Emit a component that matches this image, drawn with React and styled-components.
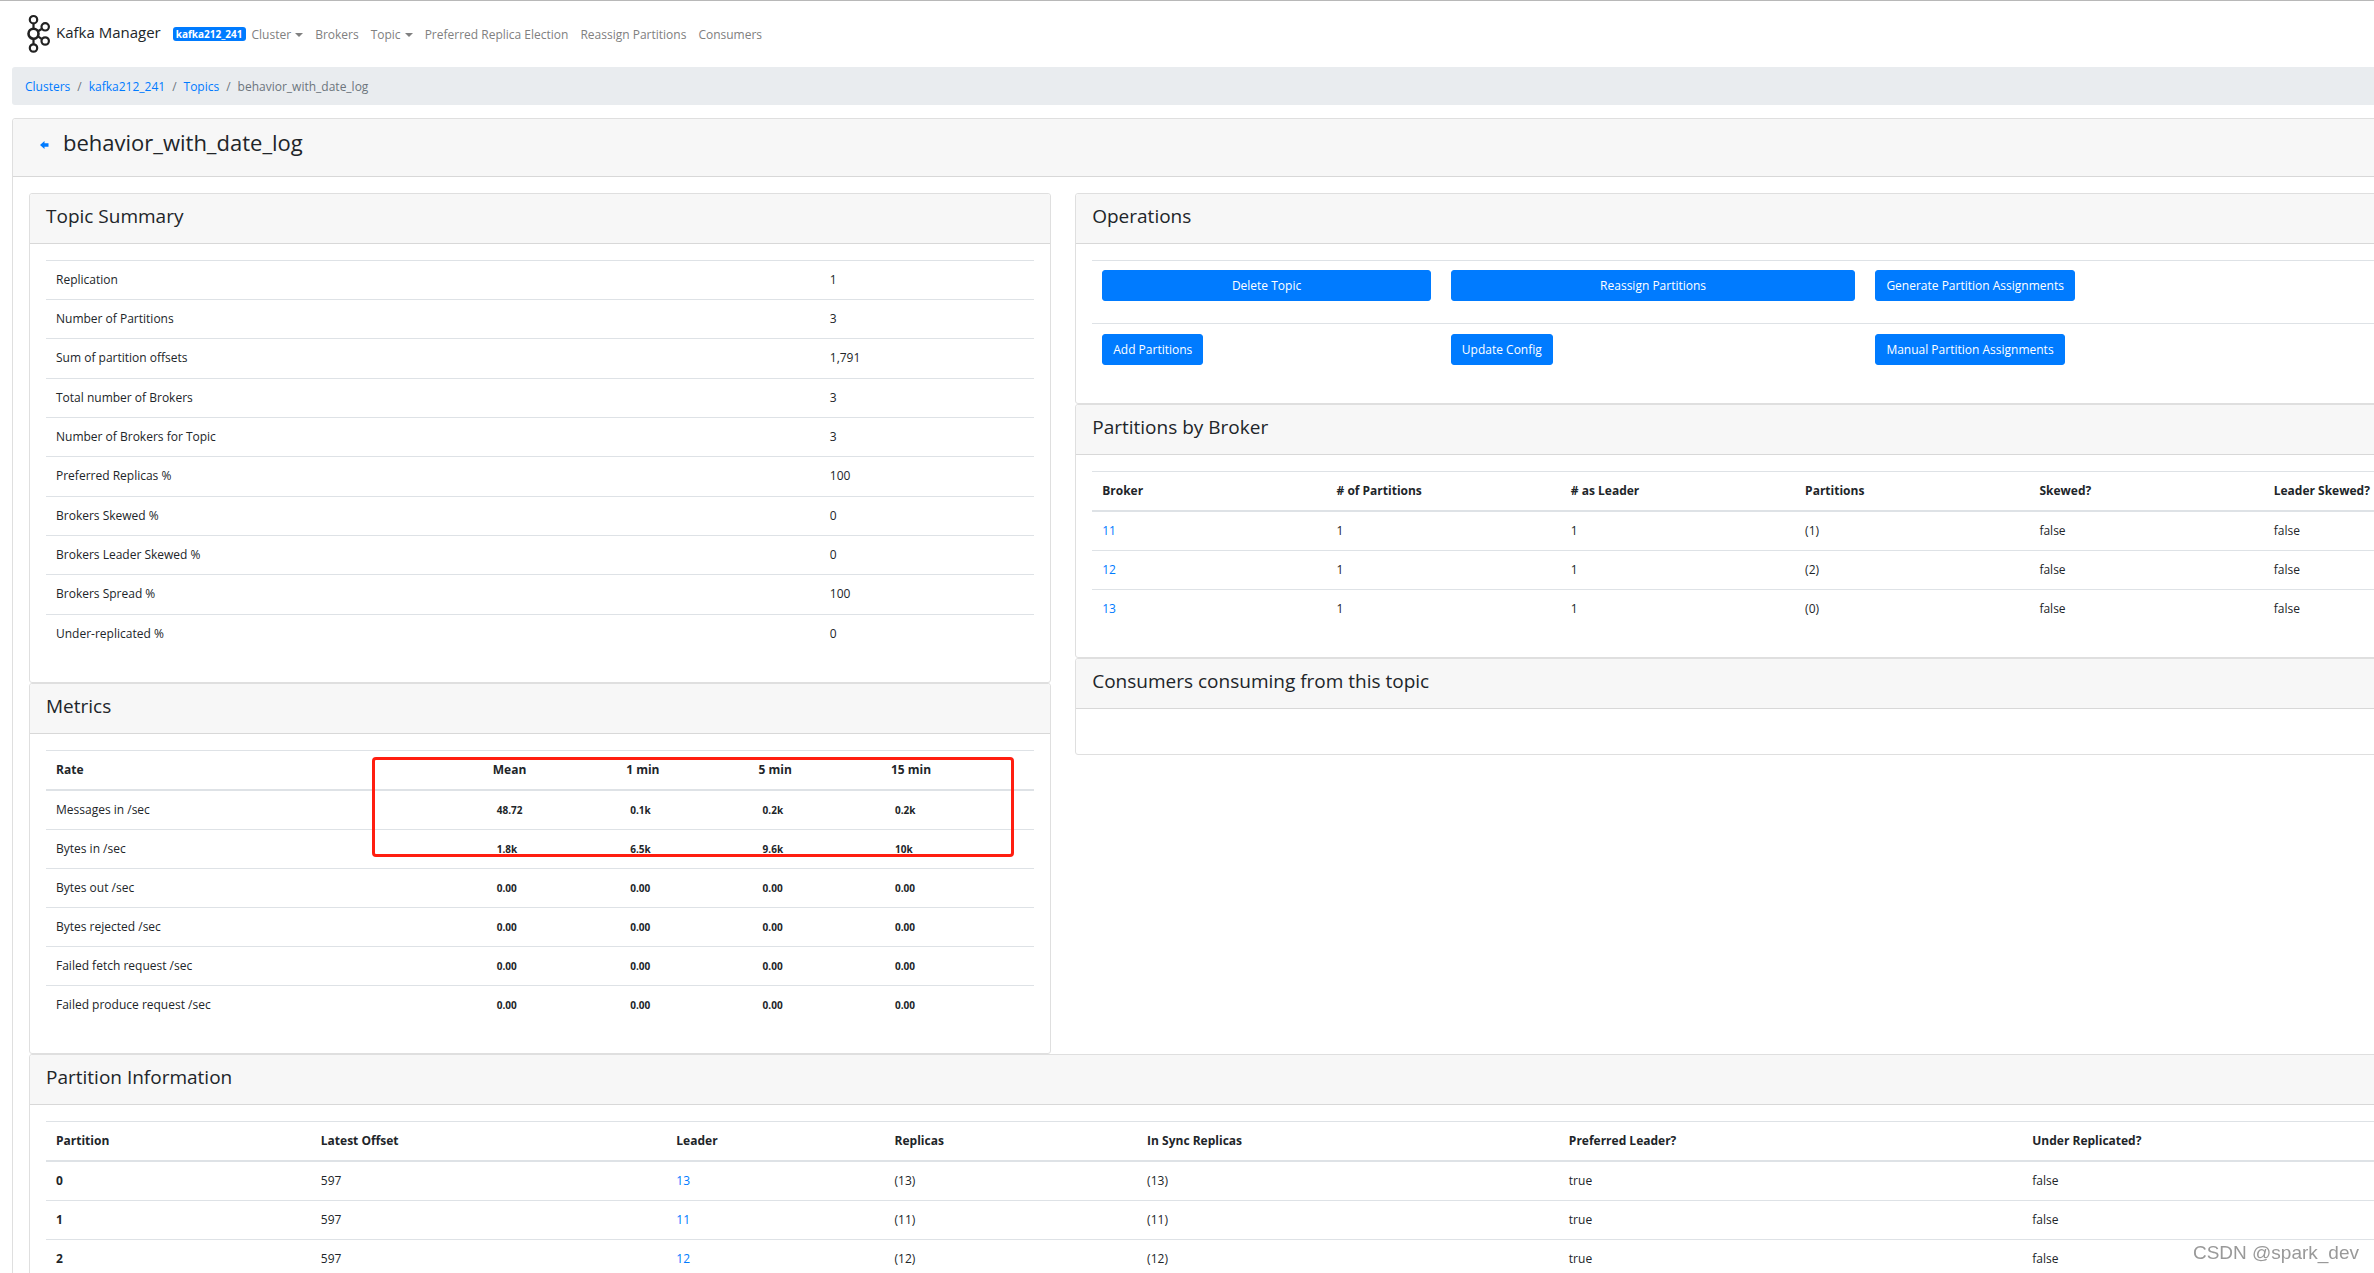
import React from 'react';
import styled, { createGlobalStyle } from 'styled-components';

const Colors = {
    Primary: '#007bff',
    Text: '#212529',
    Muted: '#6c757d',
    NavLink: '#808080',
    Border: '#dfdfdf',
    TableBorder: '#dee2e6',
    HeaderBackground: '#f7f7f7',
    Breadcrumb: '#e9ecef',
    Highlight: '#ff1e10',
};

const GlobalStyle = createGlobalStyle`
    *, *::before, *::after {
        box-sizing: border-box;
    }

    body {
        margin: 0;
        background-color: #fff;
        color: ${Colors.Text};
        font-family: "Open Sans", "Noto Sans", sans-serif;
        font-size: 12px;
        line-height: 20px;
    }

    a {
        color: ${Colors.Primary};
        text-decoration: none;
    }

    h1, h2 {
        margin: 0;
        font-weight: 500;
    }
`;

const Viewport = styled.div`
    height: 100vh;
    overflow: auto;
    scrollbar-width: none;
    border-top: 1px solid #b8b8b8;
`;

/* the dashboard is wider than the window and scrolls sideways */
const Page = styled.div`
    width: calc(100% + 170px);
    padding: 0 12px;
`;

const Navbar = styled.nav`
    display: flex;
    align-items: center;
    height: 66px;
    padding-left: 15px;
`;

const Brand = styled.a`
    display: flex;
    align-items: center;
    gap: 4px;
    margin-right: 12px;
    color: ${Colors.Text};
    font-size: 15px;
    line-height: 24px;
`;

const BrandName = styled.span`
    padding-bottom: 4px;
`;

const ClusterBadge = styled.span`
    padding: 0 3px;
    border-radius: 3px;
    background-color: ${Colors.Primary};
    color: #fff;
    font-size: 10px;
    font-weight: 700;
    line-height: 14px;
`;

const NavLinks = styled.div`
    display: flex;
    gap: 12px;
    padding: 2px 0 0 6px;
`;

const NavLink = styled.a`
    display: flex;
    align-items: center;
    gap: 4px;
    color: ${Colors.NavLink};
`;

const Caret = styled.span`
    border: 4px solid transparent;
    border-top-color: currentColor;
    border-bottom: 0;
`;

const Breadcrumb = styled.ol`
    display: flex;
    margin: 0 0 13px;
    padding: 10px 13px 8px;
    border-radius: 3px;
    background-color: ${Colors.Breadcrumb};
    list-style: none;
`;

const BreadcrumbItem = styled.li`
    color: ${Colors.Muted};

    & + &::before {
        content: "/";
        padding: 0 7px;
    }
`;

const Card = styled.section`
    border: 1px solid ${Colors.Border};
    border-radius: 3px;
    background-color: #fff;
`;

const CardHeader = styled.header`
    padding: 10px 16px 15px;
    border-bottom: 1px solid #d8d8d8;
    border-radius: 3px 3px 0 0;
    background-color: ${Colors.HeaderBackground};
`;

const CardTitle = styled.h2`
    font-size: 19px;
    line-height: 24px;
`;

const CardBody = styled.div`
    padding: 16px 16px 29px;
`;

const PageHeader = styled(CardHeader)`
    display: flex;
    align-items: center;
    gap: 14px;
    padding: 7px 27px 18px;
`;

const PageTitle = styled.h1`
    font-size: 22px;
    line-height: 32px;
`;

const BackLink = styled.a`
    display: flex;
    padding-top: 5px;
`;

const Panels = styled.div`
    padding: 16px;
`;

const Columns = styled.div`
    display: grid;
    grid-template-columns: 71fr 100fr;
    align-items: start;
    gap: 24px;
`;

const Table = styled.table`
    width: 100%;
    table-layout: fixed;
    border-collapse: separate;
    border-spacing: 0;

    th, td {
        padding: 9px 10px;
        border-top: 1px solid ${Colors.TableBorder};
        text-align: left;
        white-space: nowrap;
    }

    th {
        font-weight: 700;
    }

    thead th {
        border-bottom: 2px solid ${Colors.TableBorder};
    }

    thead + tbody tr:first-child > * {
        border-top: 0;
    }
`;

const SummaryTable = styled(Table)`
    tr:nth-child(3n) td {
        padding-bottom: 10px;
    }
`;

const Col = styled.col`
    width: ${(props) => props.$width};
`;

const MetricValue = styled.span`
    padding: 0 4px;
    font-size: 10px;
    font-weight: 700;
`;

const MetricsArea = styled.div`
    position: relative;
`;

const HighlightBox = styled.div`
    position: absolute;
    top: 7px;
    left: 33%;
    width: 65%;
    height: 100px;
    border: 3px solid ${Colors.Highlight};
    border-radius: 4px;
`;

const OperationRow = styled.div`
    display: grid;
    grid-template-columns: 24.8% 30.2% 1fr;
    justify-items: ${(props) => (props.$stretch ? 'stretch' : 'start')};
    padding: ${(props) => (props.$stretch ? '9px 0 22px' : '10px 0 9px')};
    border-top: 1px solid ${Colors.TableBorder};
`;

const OperationCell = styled.div`
    display: flex;
    padding: 0 10px;
`;

const Button = styled.button`
    flex: ${(props) => (props.$block ? '1' : 'none')};
    padding: 5px 10px;
    border: 1px solid ${Colors.Primary};
    border-radius: 3px;
    background-color: ${Colors.Primary};
    color: #fff;
    font-family: inherit;
    font-size: 12px;
    line-height: 19px;
    cursor: pointer;
`;

const EmptyBody = styled.div`
    height: 45px;
`;

const Watermark = styled.div`
    position: fixed;
    right: 15px;
    bottom: 8px;
    color: #999;
    font-family: "Liberation Sans", Arial, sans-serif;
    font-size: 19px;
    line-height: 24px;
    text-shadow: 1px 1px 0 #fff;
`;

const navItems = [
    { label: 'Cluster', dropdown: true },
    { label: 'Brokers' },
    { label: 'Topic', dropdown: true },
    { label: 'Preferred Replica Election' },
    { label: 'Reassign Partitions' },
    { label: 'Consumers' },
];

const summary = [
    ['Replication', '1'],
    ['Number of Partitions', '3'],
    ['Sum of partition offsets', '1,791'],
    ['Total number of Brokers', '3'],
    ['Number of Brokers for Topic', '3'],
    ['Preferred Replicas %', '100'],
    ['Brokers Skewed %', '0'],
    ['Brokers Leader Skewed %', '0'],
    ['Brokers Spread %', '100'],
    ['Under-replicated %', '0'],
];

const metrics = [
    ['Messages in /sec', '48.72', '0.1k', '0.2k', '0.2k'],
    ['Bytes in /sec', '1.8k', '6.5k', '9.6k', '10k'],
    ['Bytes out /sec', '0.00', '0.00', '0.00', '0.00'],
    ['Bytes rejected /sec', '0.00', '0.00', '0.00', '0.00'],
    ['Failed fetch request /sec', '0.00', '0.00', '0.00', '0.00'],
    ['Failed produce request /sec', '0.00', '0.00', '0.00', '0.00'],
];

const brokers = [
    { id: 11, partitions: '(1)' },
    { id: 12, partitions: '(2)' },
    { id: 13, partitions: '(0)' },
];

const partitions = [
    { id: 0, offset: 597, leader: 13 },
    { id: 1, offset: 597, leader: 11 },
    { id: 2, offset: 597, leader: 12 },
];

function KafkaLogo() {
    return (
        <svg width="25" height="40" viewBox="0 0 25 40" fill="none" stroke="#222" strokeWidth="2.2" aria-hidden="true">
            <path d="M6.5 9.5v5M6.5 25v5M11 17.2l3.6-2.2M11 22.4l3.6 2.4" />
            <circle cx="6.5" cy="5.7" r="3.7" />
            <circle cx="6.5" cy="19.7" r="5" strokeWidth="2.6" />
            <circle cx="6.5" cy="34" r="3.7" />
            <circle cx="18.2" cy="12.8" r="3.7" />
            <circle cx="18.2" cy="27" r="3.7" />
        </svg>
    );
}

function BackArrow() {
    return (
        <svg width="9" height="8" viewBox="0 0 9 8" fill={Colors.Primary} aria-hidden="true">
            <path d="M0 4l4.5-4v2.3H8.5v3.4H4.5V8z" />
        </svg>
    );
}

function Panel({ title, children }) {
    return (
        <Card>
            <CardHeader>
                <CardTitle>{title}</CardTitle>
            </CardHeader>
            {children}
        </Card>
    );
}

function TableHead({ labels }) {
    return (
        <thead>
            <tr>
                {labels.map((label) => <th key={label} scope="col">{label}</th>)}
            </tr>
        </thead>
    );
}

function ColumnWidths({ widths }) {
    return (
        <colgroup>
            {widths.map((width, index) => <Col key={index} $width={width} />)}
        </colgroup>
    );
}

function TopicSummary() {
    return (
        <Panel title="Topic Summary">
            <CardBody>
                <SummaryTable>
                    <ColumnWidths widths={['78.3%', 'auto']} />
                    <tbody>
                        {summary.map(([label, value]) => (
                            <tr key={label}>
                                <td>{label}</td>
                                <td>{value}</td>
                            </tr>
                        ))}
                    </tbody>
                </SummaryTable>
            </CardBody>
        </Panel>
    );
}

function Metrics() {
    return (
        <Panel title="Metrics">
            <CardBody>
                <MetricsArea>
                    <Table>
                        <ColumnWidths widths={['44.2%', '13.5%', '13.4%', '13.4%', 'auto']} />
                        <TableHead labels={['Rate', 'Mean', '1 min', '5 min', '15 min']} />
                        <tbody>
                            {metrics.map(([label, ...values]) => (
                                <tr key={label}>
                                    <td>{label}</td>
                                    {values.map((value, index) => (
                                        <td key={index}><MetricValue>{value}</MetricValue></td>
                                    ))}
                                </tr>
                            ))}
                        </tbody>
                    </Table>
                    <HighlightBox />
                </MetricsArea>
            </CardBody>
        </Panel>
    );
}

function Operations() {
    return (
        <Panel title="Operations">
            <CardBody>
                <OperationRow $stretch>
                    <OperationCell><Button type="button" $block>Delete Topic</Button></OperationCell>
                    <OperationCell><Button type="button" $block>Reassign Partitions</Button></OperationCell>
                    <OperationCell><Button type="button">Generate Partition Assignments</Button></OperationCell>
                </OperationRow>
                <OperationRow>
                    <OperationCell><Button type="button">Add Partitions</Button></OperationCell>
                    <OperationCell><Button type="button">Update Config</Button></OperationCell>
                    <OperationCell><Button type="button">Manual Partition Assignments</Button></OperationCell>
                </OperationRow>
            </CardBody>
        </Panel>
    );
}

function PartitionsByBroker() {
    return (
        <Panel title="Partitions by Broker">
            <CardBody>
                <Table>
                    <TableHead labels={['Broker', '# of Partitions', '# as Leader', 'Partitions', 'Skewed?', 'Leader Skewed?']} />
                    <tbody>
                        {brokers.map((broker) => (
                            <tr key={broker.id}>
                                <td><a href="#broker">{broker.id}</a></td>
                                <td>1</td>
                                <td>1</td>
                                <td>{broker.partitions}</td>
                                <td>false</td>
                                <td>false</td>
                            </tr>
                        ))}
                    </tbody>
                </Table>
            </CardBody>
        </Panel>
    );
}

function PartitionInformation() {
    return (
        <Panel title="Partition Information">
            <CardBody>
                <Table>
                    <ColumnWidths widths={['10.8%', '14.5%', '8.9%', '10.3%', '17.2%', '18.9%', 'auto']} />
                    <TableHead labels={['Partition', 'Latest Offset', 'Leader', 'Replicas', 'In Sync Replicas', 'Preferred Leader?', 'Under Replicated?']} />
                    <tbody>
                        {partitions.map(({ id, offset, leader }) => (
                            <tr key={id}>
                                <th scope="row">{id}</th>
                                <td>{offset}</td>
                                <td><a href="#broker">{leader}</a></td>
                                <td>({leader})</td>
                                <td>({leader})</td>
                                <td>true</td>
                                <td>false</td>
                            </tr>
                        ))}
                    </tbody>
                </Table>
            </CardBody>
        </Panel>
    );
}

function App() {
    return (
        <>
            <GlobalStyle />
            <Viewport>
                <Page>
                    <Navbar>
                        <Brand href="#home">
                            <KafkaLogo />
                            <BrandName>Kafka Manager</BrandName>
                        </Brand>
                        <ClusterBadge>kafka212_241</ClusterBadge>
                        <NavLinks>
                            {navItems.map((item) => (
                                <NavLink key={item.label} href="#nav">
                                    {item.label}
                                    {item.dropdown && <Caret />}
                                </NavLink>
                            ))}
                        </NavLinks>
                    </Navbar>
                    <Breadcrumb>
                        <BreadcrumbItem><a href="#clusters">Clusters</a></BreadcrumbItem>
                        <BreadcrumbItem><a href="#cluster">kafka212_241</a></BreadcrumbItem>
                        <BreadcrumbItem><a href="#topics">Topics</a></BreadcrumbItem>
                        <BreadcrumbItem>behavior_with_date_log</BreadcrumbItem>
                    </Breadcrumb>
                    <Card>
                        <PageHeader>
                            <BackLink href="#topics" aria-label="Back to topics">
                                <BackArrow />
                            </BackLink>
                            <PageTitle>behavior_with_date_log</PageTitle>
                        </PageHeader>
                        <Panels>
                            <Columns>
                                <div>
                                    <TopicSummary />
                                    <Metrics />
                                </div>
                                <div>
                                    <Operations />
                                    <PartitionsByBroker />
                                    <Panel title="Consumers consuming from this topic">
                                        <EmptyBody />
                                    </Panel>
                                </div>
                            </Columns>
                            <PartitionInformation />
                        </Panels>
                    </Card>
                </Page>
            </Viewport>
            <Watermark>CSDN @spark_dev</Watermark>
        </>
    );
}

export default App;
